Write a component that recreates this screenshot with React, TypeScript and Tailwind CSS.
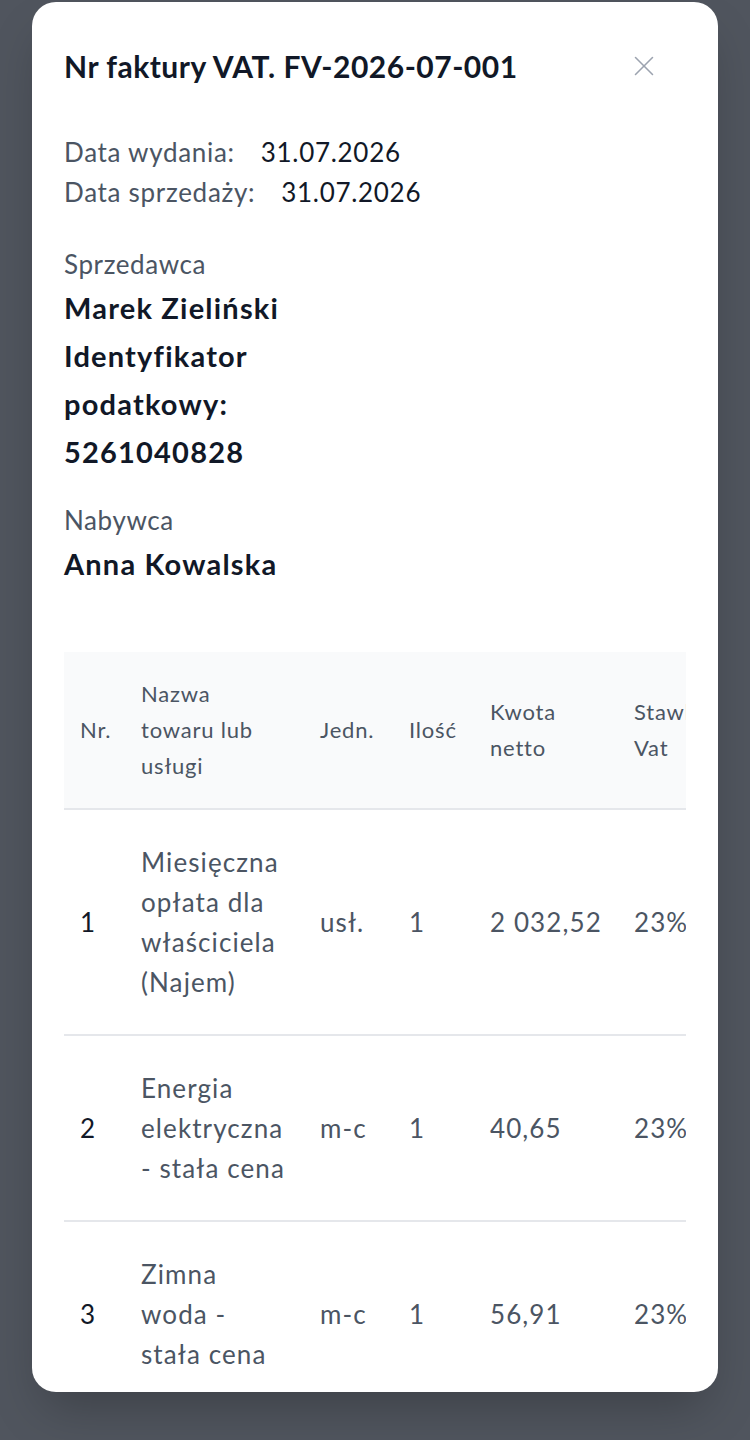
import { X } from 'lucide-react'

interface Row {
  nr: number
  name: string
  unit: string
  qty: string
  net: string
  rate: string
  vat: string
  gross: string
}

const rows: Row[] = [
  { nr: 1, name: 'Miesięczna opłata dla właściciela (Najem)', unit: 'usł.', qty: '1', net: '2 032,52', rate: '23%', vat: '467,48', gross: '2 500,00' },
  { nr: 2, name: 'Energia elektryczna - stała cena', unit: 'm-c', qty: '1', net: '40,65', rate: '23%', vat: '9,35', gross: '50,00' },
  { nr: 3, name: 'Zimna woda - stała cena', unit: 'm-c', qty: '1', net: '56,91', rate: '23%', vat: '13,09', gross: '70,00' },
]

export default function App() {
  return (
    <div
      className="w-[750px] h-[1440px] bg-[#50555e] overflow-hidden pt-[2px] px-8"
      style={{ fontFamily: 'Lato, "Noto Sans", sans-serif' }}
    >
      <div className="bg-white rounded-[24px] h-[1390px] overflow-hidden px-8 pt-[42px] shadow-2xl">
        {/* Header */}
        <div className="flex items-center justify-between">
          <h2 className="text-[30px] leading-[44px] font-bold text-[#111827] tracking-[0.5px]">
            Nr faktury VAT. FV-2026-07-001
          </h2>
          <button className="mr-[25px] text-[#9ca3af]">
            <X size={34} strokeWidth={1.1} />
          </button>
        </div>

        {/* Dates */}
        <div className="mt-[44px] text-[26px] leading-[40px] tracking-[0.7px]">
          <div className="flex gap-[26px]">
            <span className="text-[#4b5563]">Data wydania:</span>
            <span className="text-[#111827]">31.07.2026</span>
          </div>
          <div className="flex gap-[26px]">
            <span className="text-[#4b5563]">Data sprzedaży:</span>
            <span className="text-[#111827]">31.07.2026</span>
          </div>
        </div>

        {/* Parties */}
        <div className="grid grid-cols-2 gap-8 mt-[32px]">
          <div>
            <div className="text-[26px] leading-[40px] tracking-[0.6px] text-[#4b5563]">Sprzedawca</div>
            <div className="text-[29px] leading-[48px] font-bold tracking-[1.2px] text-[#111827]">
              <div>Marek Zieliński</div>
              <div>Identyfikator podatkowy: 5261040828</div>
            </div>
          </div>
        </div>

        <div className="mt-[24px]">
          <div className="text-[26px] leading-[40px] tracking-[0.6px] text-[#4b5563]">Nabywca</div>
          <div className="text-[29px] leading-[48px] font-bold tracking-[1.2px] text-[#111827]">Anna Kowalska</div>
        </div>

        {/* Items table */}
        <div className="mt-[64px] overflow-hidden">
          <table className="table-fixed border-collapse w-[1000px] text-left">
            <colgroup>
              <col className="w-[61px]" />
              <col className="w-[179px]" />
              <col className="w-[89px]" />
              <col className="w-[81px]" />
              <col className="w-[144px]" />
              <col className="w-[140px]" />
              <col className="w-[150px]" />
              <col className="w-[156px]" />
            </colgroup>
            <thead className="bg-[#f9fafb]">
              <tr className="border-b-2 border-[#e5e7eb] text-[22px] leading-[36px] tracking-[0.8px] text-[#4b5563]">
                <th className="font-normal px-4 py-6">Nr.</th>
                <th className="font-normal px-4 py-6">Nazwa towaru lub usługi</th>
                <th className="font-normal px-4 py-6">Jedn.</th>
                <th className="font-normal px-4 py-6">Ilość</th>
                <th className="font-normal px-4 py-6">Kwota netto</th>
                <th className="font-normal px-4 py-6">Stawka Vat</th>
                <th className="font-normal px-4 py-6">Kwota VAT</th>
                <th className="font-normal px-4 py-6">Kwota brutto</th>
              </tr>
            </thead>
            <tbody className="text-[26px] leading-[40px] tracking-[1.1px] text-[#4b5563]">
              {rows.map((r) => (
                <tr key={r.nr} className="border-b-2 border-[#e5e7eb]">
                  <td className="px-4 py-8 text-[#111827]">{r.nr}</td>
                  <td className="px-4 py-8">{r.name}</td>
                  <td className="px-4 py-8">{r.unit}</td>
                  <td className="px-4 py-8">{r.qty}</td>
                  <td className="px-4 py-8 whitespace-nowrap">{r.net}</td>
                  <td className="px-4 py-8">{r.rate}</td>
                  <td className="px-4 py-8">{r.vat}</td>
                  <td className="px-4 py-8 whitespace-nowrap">{r.gross}</td>
                </tr>
              ))}
            </tbody>
          </table>
        </div>
      </div>
    </div>
  )
}
